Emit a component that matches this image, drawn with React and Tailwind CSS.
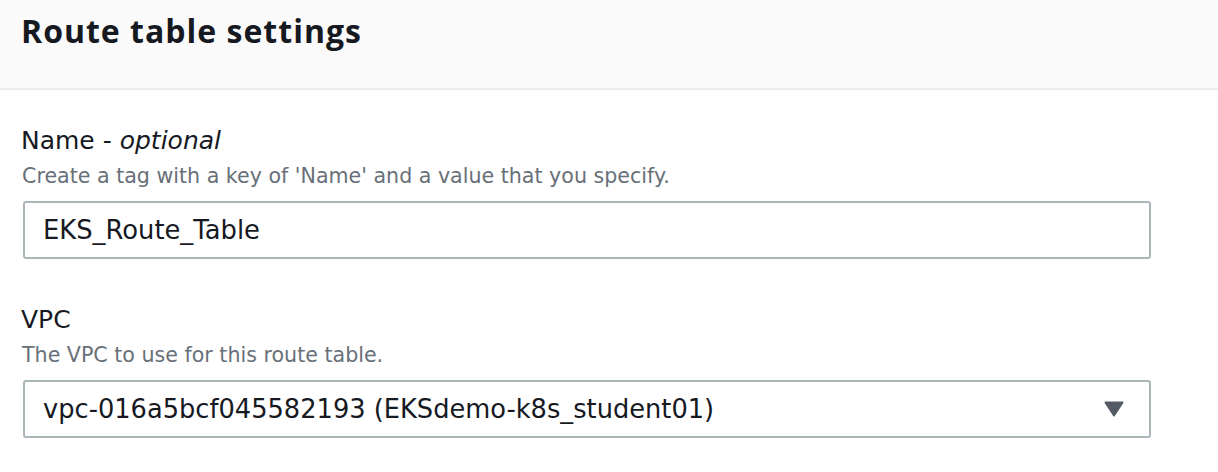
import React from "react";

// field label + hint + control, same spacing for every row
function Field({ label, hint, children, className = "" }) {
  return (
    <div className={className}>
      <div className="-ml-[2px] text-[25px] leading-[32px] text-[#16191f]">{label}</div>
      <div className="-ml-[1px] mt-[5px] text-[20.6px] leading-[28px] text-[#687078]">{hint}</div>
      <div className="mt-[11px]">{children}</div>
    </div>
  );
}

export default function App() {
  return (
    <div className="w-[1218px] h-[472px] bg-white overflow-hidden font-['DejaVu_Sans',sans-serif]">
      {/* header */}
      <div className="h-[90px] bg-[#fafafa] border-b-2 border-[#eaeded] pl-[21px] pt-[9px]">
        <h2 className="font-['Open_Sans',sans-serif] text-[32px] leading-[44px] font-bold text-[#16191f] tracking-[1px]">
          Route table settings
        </h2>
      </div>

      <div className="pl-[23px] pr-[67px] pt-[35px]">
        <Field
          label={
            <>
              Name - <i>optional</i>
            </>
          }
          hint="Create a tag with a key of 'Name' and a value that you specify."
        >
          <div className="h-[58px] border-2 border-[#aab7b8] rounded-[3px] flex items-center pl-[18px]">
            <span className="text-[25.8px] leading-[30px] text-[#16191f]">EKS_Route_Table</span>
          </div>
        </Field>

        <Field className="mt-[45px]" label="VPC" hint="The VPC to use for this route table.">
          <div className="h-[58px] border-2 border-[#aab7b8] rounded-[3px] flex items-center justify-between pl-[18px] pr-[25px]">
            <span className="text-[25.7px] leading-[30px] text-[#16191f]">
              vpc-016a5bcf045582193 (EKSdemo-k8s_student01)
            </span>
            <svg width="20" height="16" viewBox="0 0 20 16">
              <path
                d="M1.5 1.5 L18.5 1.5 L10 14.5 Z"
                fill="#545b64"
                stroke="#545b64"
                strokeWidth="2"
                strokeLinejoin="round"
              />
            </svg>
          </div>
        </Field>
      </div>
    </div>
  );
}
